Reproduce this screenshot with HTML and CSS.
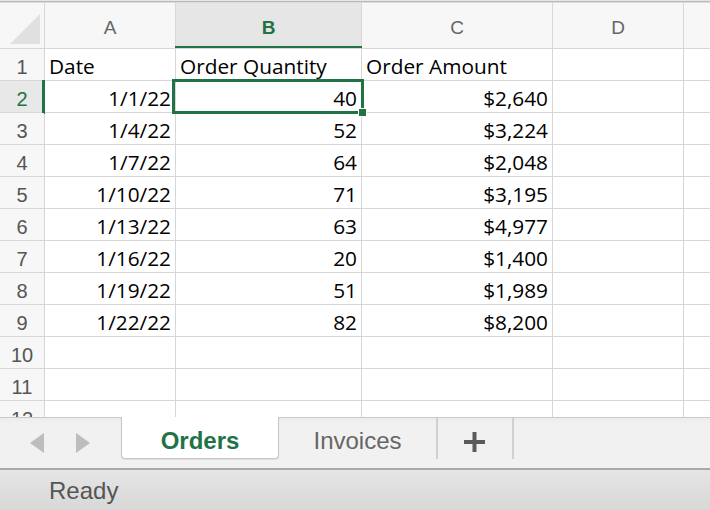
FILE: index.html
```html
<!DOCTYPE html>
<html lang="en">

<head>
    <meta charset="utf-8">
    <title>Orders</title>
    <link rel="stylesheet" href="styles.css">
</head>

<body>
    <div class="topbar"></div>

    <div class="sheet">
        <div class="grid">
            <div class="cell colhead corner">
                <svg width="44" height="45" viewBox="0 0 44 45"><polygon points="40,11 40,41 10,41" fill="#e0e0e0"/></svg>
            </div>
            <div class="cell colhead">A</div>
            <div class="cell colhead active">B</div>
            <div class="cell colhead">C</div>
            <div class="cell colhead">D</div>
            <div class="cell colhead"></div>

            <div class="cell rowhead">1</div>
            <div class="cell">Date</div>
            <div class="cell">Order Quantity</div>
            <div class="cell">Order Amount</div>
            <div class="cell"></div>
            <div class="cell"></div>

            <div class="cell rowhead active">2</div>
            <div class="cell num">1/1/22</div>
            <div class="cell num selected">40<div class="sel"></div><div class="handle"></div></div>
            <div class="cell num">$2,640</div>
            <div class="cell"></div>
            <div class="cell"></div>

            <div class="cell rowhead">3</div>
            <div class="cell num">1/4/22</div>
            <div class="cell num">52</div>
            <div class="cell num">$3,224</div>
            <div class="cell"></div>
            <div class="cell"></div>

            <div class="cell rowhead">4</div>
            <div class="cell num">1/7/22</div>
            <div class="cell num">64</div>
            <div class="cell num">$2,048</div>
            <div class="cell"></div>
            <div class="cell"></div>

            <div class="cell rowhead">5</div>
            <div class="cell num">1/10/22</div>
            <div class="cell num">71</div>
            <div class="cell num">$3,195</div>
            <div class="cell"></div>
            <div class="cell"></div>

            <div class="cell rowhead">6</div>
            <div class="cell num">1/13/22</div>
            <div class="cell num">63</div>
            <div class="cell num">$4,977</div>
            <div class="cell"></div>
            <div class="cell"></div>

            <div class="cell rowhead">7</div>
            <div class="cell num">1/16/22</div>
            <div class="cell num">20</div>
            <div class="cell num">$1,400</div>
            <div class="cell"></div>
            <div class="cell"></div>

            <div class="cell rowhead">8</div>
            <div class="cell num">1/19/22</div>
            <div class="cell num">51</div>
            <div class="cell num">$1,989</div>
            <div class="cell"></div>
            <div class="cell"></div>

            <div class="cell rowhead">9</div>
            <div class="cell num">1/22/22</div>
            <div class="cell num">82</div>
            <div class="cell num">$8,200</div>
            <div class="cell"></div>
            <div class="cell"></div>

            <div class="cell rowhead">10</div>
            <div class="cell"></div>
            <div class="cell"></div>
            <div class="cell"></div>
            <div class="cell"></div>
            <div class="cell"></div>

            <div class="cell rowhead">11</div>
            <div class="cell"></div>
            <div class="cell"></div>
            <div class="cell"></div>
            <div class="cell"></div>
            <div class="cell"></div>

            <div class="cell rowhead">12</div>
            <div class="cell"></div>
            <div class="cell"></div>
            <div class="cell"></div>
            <div class="cell"></div>
            <div class="cell"></div>
        </div>
    </div>

    <div class="tabbar">
        <div class="arrows">
            <svg width="121" height="50" viewBox="0 0 121 50">
                <polygon points="44,15 44,35 30,25" fill="#bdbdbd"/>
                <polygon points="76,15 76,35 90,25" fill="#bdbdbd"/>
            </svg>
        </div>
        <div class="tab current">Orders</div>
        <div class="tab">Invoices</div>
        <div class="tab add">
            <svg width="22" height="20" viewBox="0 0 22 20">
                <rect x="0" y="8" width="21" height="4" fill="#5a5a5a"/>
                <rect x="8.5" y="0" width="4" height="20" fill="#5a5a5a"/>
            </svg>
        </div>
    </div>

    <div class="status">Ready</div>
</body>

</html>
```

FILE: styles.css
```css
body {
    margin: 0;
    width: 710px;
    height: 510px;
    overflow: hidden;
    background-color: #fff;
    font-family: "Liberation Sans", Arial, sans-serif;
}

.topbar {
    height: 3px;
    background: linear-gradient(#e6e6e6 0 1px, #b9b9b9 1px 2px, #dcdcdc 2px 3px);
}

.sheet {
    height: 414px;
    overflow: hidden;
}

.grid {
    display: grid;
    grid-template-columns: 44px 130px 185px 190px 130px 1fr;
    grid-template-rows: 45px repeat(12, 31px);
    gap: 1px;
    background-color: #d7d7d7;
}

.cell {
    position: relative;
    display: flex;
    align-items: flex-end;
    padding: 0 4px 2px 4px;
    background-color: #fff;
    font-family: "Open Sans", sans-serif;
    font-size: 20.8px;
    line-height: 24px;
    color: #000;
    white-space: nowrap;
}

.num {
    justify-content: flex-end;
}

.colhead {
    align-items: flex-start;
    justify-content: center;
    padding: 15px 0 0 0;
    background-color: #f7f7f7;
    font-family: "Liberation Sans", Arial, sans-serif;
    font-size: 19px;
    line-height: 20px;
    color: #666;
}

.colhead.corner {
    padding: 0;
}

.colhead.active {
    background-color: #e6e6e6;
    color: #217346;
    font-weight: bold;
}

.colhead.active::after {
    content: "";
    position: absolute;
    left: -1px;
    right: -1px;
    bottom: 0;
    height: 2px;
    background-color: #217346;
}

.rowhead {
    justify-content: center;
    padding: 0 0 1px 0;
    background-color: #f7f7f7;
    font-family: "Liberation Sans", Arial, sans-serif;
    font-size: 20px;
    color: #555;
}

.rowhead.active {
    background-color: #e8e8e8;
    color: #217346;
}

.rowhead.active::after {
    content: "";
    position: absolute;
    right: -1px;
    top: -1px;
    bottom: -2px;
    width: 3px;
    background-color: #217346;
}

.selected {
    z-index: 2;
}

.sel {
    position: absolute;
    left: -4px;
    top: -2px;
    right: -3px;
    bottom: -2px;
    border: 3px solid #217346;
}

.handle {
    position: absolute;
    right: -6px;
    bottom: -5px;
    width: 7px;
    height: 7px;
    background-color: #217346;
    border: 1px solid #fff;
}

.tabbar {
    display: flex;
    align-items: flex-start;
    height: 50px;
    border-top: 1px solid #c9c9c9;
    border-bottom: 2px solid #a9a9a9;
    background: linear-gradient(#ececec, #f1f1f1 6px);
}

.arrows {
    width: 121px;
    height: 50px;
}

.tab {
    box-sizing: border-box;
    width: 159px;
    height: 41px;
    padding-top: 5px;
    line-height: 35px;
    text-align: center;
    font-size: 24px;
    color: #666;
    border-right: 2px solid #d0d0d0;
}

.tab.current {
    width: 158px;
    height: 42px;
    margin-top: -1px;
    padding-top: 6px;
    background-color: #fff;
    border: 1px solid #c6c6c6;
    border-top: none;
    border-radius: 0 0 4px 4px;
    box-shadow: 0 1px 1px rgba(0, 0, 0, 0.08);
    color: #217346;
    font-weight: bold;
}

.tab.add {
    width: 76px;
    padding-top: 14px;
    line-height: 0;
}

.status {
    box-sizing: border-box;
    height: 40px;
    padding: 2px 0 0 49px;
    line-height: 38px;
    font-size: 24px;
    color: #555;
    background: linear-gradient(#e5e5e5, #d8d8d8);
}
```
